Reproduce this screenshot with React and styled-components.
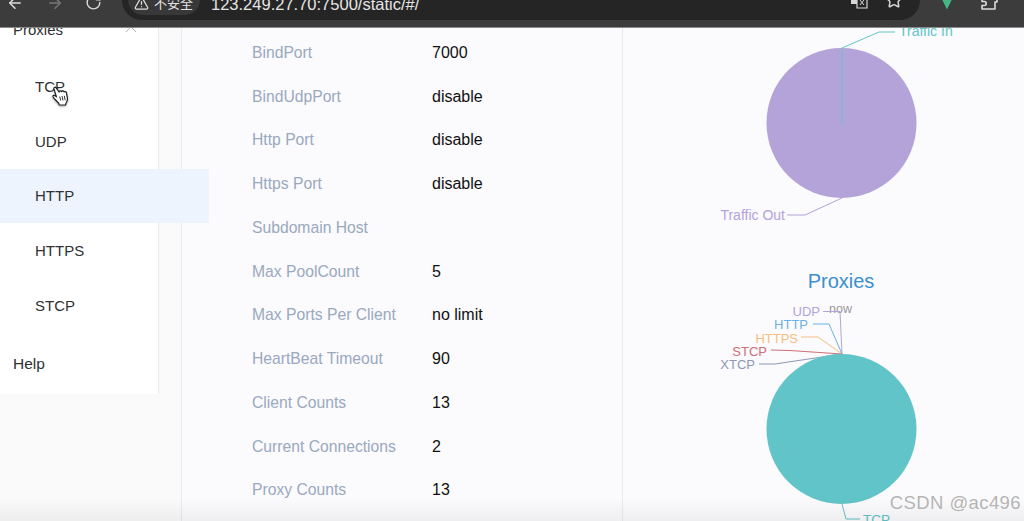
import React from "react";
import styled, { createGlobalStyle } from "styled-components";
import { ArrowLeft, ArrowRight, RotateCw, TriangleAlert, Star } from "lucide-react";

const Global = createGlobalStyle`
  html, body { margin: 0; padding: 0; background: #fafafb; }
  body { font-family: "Liberation Sans", Arial, sans-serif; }
`;

const Page = styled.div`
  position: relative;
  width: 1024px;
  height: 521px;
  overflow: hidden;
  display: flex;
  flex-direction: column;
  background: #fafafb;
`;

const Toolbar = styled.header`
  height: 28px;
  flex: none;
  box-sizing: border-box;
  display: flex;
  align-items: flex-start;
  background: #3c3c3c;
  border-bottom: 1px solid #8a8a8a;
  overflow: hidden;
  color: #d8d8d8;
  position: relative;
  z-index: 2;
`;

const NavIcon = styled.span`
  flex: none;
  width: ${(p) => p.$w}px;
  display: flex;
  justify-content: center;
  margin-top: -6px;
  color: ${(p) => p.$color || "#dcdcdc"};
`;

const Omnibox = styled.div`
  flex: none;
  width: 798px;
  height: 46px;
  margin-top: -26px;
  margin-left: 15px;
  border-radius: 20px;
  background: #252525;
  display: flex;
  align-items: flex-end;
  box-sizing: border-box;
  padding: 0 17px 5px 6px;
`;

const Chip = styled.div`
  flex: none;
  width: 72px;
  height: 30px;
  border-radius: 15px;
  background: #383838;
  display: flex;
  align-items: flex-end;
  gap: 5px;
  box-sizing: border-box;
  padding: 0 0 4px 6px;
  font: 13px "Noto Sans CJK SC", sans-serif;
  color: #e2e2e2;
  line-height: 16px;
`;

const Url = styled.div`
  flex: 1;
  margin-left: 11px;
  font-size: 16.5px;
  line-height: 19px;
  margin-bottom: 1px;
  color: #e6e6e6;
`;

const OmniIcons = styled.div`
  display: flex;
  gap: 17px;
  margin-bottom: 6px;
  color: #d8d8d8;
`;

const ExtGroup = styled.div`
  display: flex;
  flex: none;
  margin-left: 18px;
  align-items: flex-start;
  gap: 23px;
  margin-top: -8px;
`;

const Divider = styled.i`
  width: 1px;
  height: 20px;
  margin: 0 0 0 10px;
  background: #666;
`;

const Body = styled.main`
  flex: 1;
  min-height: 0;
  display: flex;
  align-items: flex-start;
  overflow: hidden;
`;

const Sidebar = styled.nav`
  flex: none;
  width: 159px;
  box-sizing: border-box;
  margin-top: -27px;
  height: 393px;
  background: #fff;
  border-right: 1px solid #e9e9ee;
  position: relative;
  z-index: 1;
`;

const GroupTitle = styled.div`
  height: 58.5px;
  box-sizing: border-box;
  padding: 0 21px 2px 13px;
  display: flex;
  align-items: center;
  justify-content: space-between;
  font-size: 15px;
  color: #303133;
  svg { color: #b0b3ba; }
`;

const SubItem = styled.div`
  height: 54.6px;
  width: 209px;
  box-sizing: border-box;
  display: flex;
  align-items: center;
  padding-left: 35px;
  font-size: 15px;
  color: #303133;
  background: ${(p) => (p.$active ? "#eef4fe" : "transparent")};
`;

const HelpItem = styled.div`
  height: 58px;
  margin-top: 3px;
  display: flex;
  align-items: center;
  padding-left: 13px;
  font-size: 15.5px;
  color: #303133;
`;

const Details = styled.section`
  flex: none;
  width: 442px;
  height: 100vh;
  margin-left: 22px;
  box-sizing: border-box;
  border-left: 1px solid #e9e9f0;
  border-right: 1px solid #e9e9f0;
  padding: 3px 0 0 70px;
  background: #fbfafc;
`;

const Row = styled.div`
  height: 43.75px;
  display: flex;
  align-items: center;
`;

const Label = styled.span`
  width: 180px;
  flex: none;
  font-size: 15.7px;
  color: #99a9bf;
`;

const Value = styled.span`
  font-size: 16px;
  color: #111;
`;

const Charts = styled.section`
  flex: none;
  width: 401px;
  display: flex;
  flex-direction: column;
  background: #fbfafc;
`;

const ChartSvg = styled.svg`
  display: block;
  width: 401px;
  font-family: "Liberation Sans", Arial, sans-serif;
`;

const CursorMark = styled.span`
  position: absolute;
  left: 51px;
  top: 86px;
  z-index: 3;
  display: flex;
  filter: drop-shadow(0 1px 1px rgba(0,0,0,.35));
`;

const Watermark = styled.div`
  position: absolute;
  right: 3px;
  bottom: 7px;
  z-index: 4;
  font-size: 18.5px;
  line-height: 22px;
  letter-spacing: 0.4px;
  color: #b4b4b4;
  text-shadow: 0 0 2px #fff;
`;

const BottomShade = styled.div`
  position: absolute;
  left: 0;
  right: 0;
  bottom: 0;
  height: 24px;
  z-index: 3;
  pointer-events: none;
  background: linear-gradient(to bottom, rgba(0,0,0,0), rgba(0,0,0,0.05));
`;

const rows = [
  ["BindPort", "7000"],
  ["BindUdpPort", "disable"],
  ["Http Port", "disable"],
  ["Https Port", "disable"],
  ["Subdomain Host", ""],
  ["Max PoolCount", "5"],
  ["Max Ports Per Client", "no limit"],
  ["HeartBeat Timeout", "90"],
  ["Client Counts", "13"],
  ["Current Connections", "2"],
  ["Proxy Counts", "13"],
];

const labels = [
  { t: "UDP", c: "#b3a5dc", x: 820, y: 311.5, d: "M823 311.5H840L842 354" },
  { t: "HTTP", c: "#6cb1e6", x: 808, y: 324.5, d: "M813 324H829L842 354" },
  { t: "HTTPS", c: "#f5bf82", x: 798, y: 338, d: "M801 337H818L842 354" },
  { t: "STCP", c: "#cd6f78", x: 767, y: 351, d: "M771 350L790 350.5L842 354" },
  { t: "XTCP", c: "#8d98b3", x: 755, y: 364, d: "M759 364H775L842 354" },
];

function TrafficChart() {
  return (
    <ChartSvg viewBox="623 28 401 232" height="232">
      <circle cx="841.5" cy="123" r="75" fill="#b3a3d9" />
      <path d="M842 123V48L879 32H895" fill="none" stroke="#61c4c8" strokeWidth="1" />
      <text x="899" y="36" fontSize="14" fill="#61c4c8">Traffic In</text>
      <path d="M842 198L805 215H787" fill="none" stroke="#b3a3d9" strokeWidth="1" />
      <text x="785" y="219.5" fontSize="14" fill="#b3a3d9" textAnchor="end">Traffic Out</text>
    </ChartSvg>
  );
}

function ProxyChart() {
  return (
    <ChartSvg viewBox="623 260 401 261" height="261">
      <text x="841" y="288" fontSize="20" fill="#3a8fcf" textAnchor="middle">Proxies</text>
      <text x="829" y="313" fontSize="12.5" fill="#999">now</text>
      {labels.map((l) => (
        <g key={l.t}>
          <path d={l.d} fill="none" stroke={l.c} strokeWidth="1" />
          <text x={l.x} y={l.y + 4.5} fontSize="13" fill={l.c} textAnchor="end">{l.t}</text>
        </g>
      ))}
      <circle cx="841.5" cy="429" r="75" fill="#61c4c8" />
      <path d="M842 504L846 519H860" fill="none" stroke="#61c4c8" strokeWidth="1" />
      <text x="863" y="524" fontSize="13.5" fill="#61c4c8">TCP</text>
    </ChartSvg>
  );
}

function HandCursor() {
  return (
    <svg width="18" height="20" viewBox="0 0 18 20" aria-hidden="true">
      <path
        d="M3 3.2c-.8-1.6 1.2-2.7 2.2-1.3l3 4.2c0-1.3 1.9-1.7 2.5-.4.3-1 2-1.1 2.4.2.5-.7 2-.5 2.3.8l1 5.2c.4 2.4-.4 4-1.6 5.6l-.2 1.5H8.2l-.3-1.5L3.7 13c-.9-1-2.4-2.3-1.6-3.3.7-.8 2-.3 3.4 1.2z"
        fill="#fff"
        stroke="#222"
        strokeWidth="1.2"
        strokeLinejoin="round"
      />
      <path d="M8.7 10.5l1 4M11 10l1 4.5M13.3 9.8l.9 4.5" stroke="#333" strokeWidth="1" fill="none" />
    </svg>
  );
}

export default function App() {
  return (
    <Page>
      <Global />
      <Toolbar>
        <NavIcon $w={30}><ArrowLeft size={18} /></NavIcon>
        <NavIcon $w={50} $color="#777"><ArrowRight size={18} /></NavIcon>
        <NavIcon $w={27}><RotateCw size={17} /></NavIcon>
        <Omnibox>
          <Chip><TriangleAlert size={15} />不安全</Chip>
          <Url>123.249.27.70:7500/static/#/</Url>
          <OmniIcons>
            <svg width="18" height="18" viewBox="0 0 18 18" aria-hidden="true">
              <path d="M1 1h10v12H1z" fill="#d8d8d8" />
              <path d="M7 4h10v13H7z" fill="#252525" stroke="#d8d8d8" strokeWidth="1.2" />
              <path d="M10 8h4M10 14l4-5M10 9l4 5" stroke="#d8d8d8" strokeWidth="1" fill="none" />
            </svg>
            <Star size={18} />
          </OmniIcons>
        </Omnibox>
        <ExtGroup>
          <svg width="18" height="18" viewBox="0 0 18 18" aria-hidden="true">
            <path d="M1 1h16L9 17.5z" fill="#42b883" />
            <path d="M5.5 1h7L9 8z" fill="#3c3c3c" />
          </svg>
          <svg width="19" height="18" viewBox="0 0 19 18" fill="none" stroke="#dcdcdc" strokeWidth="1.6" strokeLinejoin="round" aria-hidden="true">
            <path d="M2 1h14v5.5h2v3.5h-2v7H3v-3.5h2.2a2 2 0 0 0 0-4H3V1" />
          </svg>
          <Divider />
        </ExtGroup>
      </Toolbar>
      <Body>
        <Sidebar>
          <GroupTitle>
            Proxies
            <svg width="12" height="8" viewBox="0 0 12 8" aria-hidden="true">
              <path d="M1 7l5-5 5 5" fill="none" stroke="currentColor" strokeWidth="1" />
            </svg>
          </GroupTitle>
          <SubItem>TCP</SubItem>
          <SubItem>UDP</SubItem>
          <SubItem $active>HTTP</SubItem>
          <SubItem>HTTPS</SubItem>
          <SubItem>STCP</SubItem>
          <HelpItem>Help</HelpItem>
        </Sidebar>
        <Details>
          {rows.map(([k, v]) => (
            <Row key={k}>
              <Label>{k}</Label>
              <Value>{v}</Value>
            </Row>
          ))}
        </Details>
        <Charts>
          <TrafficChart />
          <ProxyChart />
        </Charts>
      </Body>
      <CursorMark>
        <HandCursor />
      </CursorMark>
      <BottomShade />
      <Watermark>CSDN @ac496</Watermark>
    </Page>
  );
}
